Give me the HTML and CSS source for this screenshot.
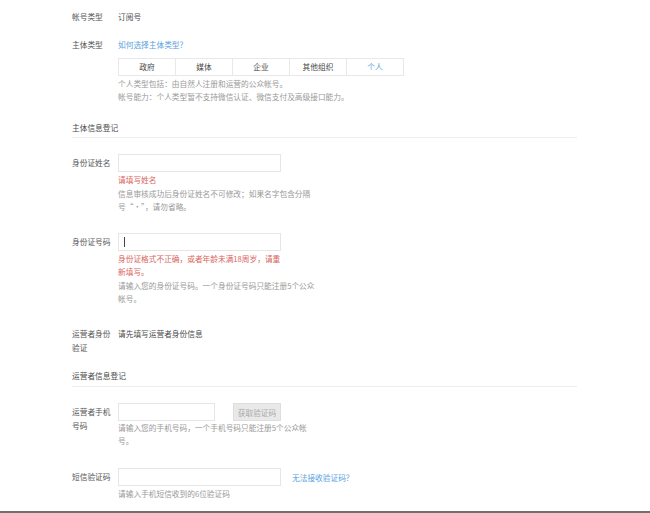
FILE: index.html
```html
<!DOCTYPE html>
<html lang="zh-CN">
<head>
    <meta charset="UTF-8">
    <meta name="viewport" content="width=device-width, initial-scale=1.0">
    <title>公众号注册 - 信息登记</title>
    <link rel="stylesheet" href="styles.css">
</head>
<body>

    <!-- Main form -->
    <div class="page">

        <div class="row">
            <div class="row-label">帐号类型</div>
            <div class="row-body">订阅号</div>
        </div>

        <div class="row row-type">
            <div class="row-label">主体类型</div>
            <div class="row-body">
                <a class="link" href="#">如何选择主体类型？</a>
                <ul class="types">
                    <li>政府</li>
                    <li>媒体</li>
                    <li>企业</li>
                    <li>其他组织</li>
                    <li class="active">个人</li>
                </ul>
                <p class="hint hint-wide">个人类型包括：由自然人注册和运营的公众帐号。<br>帐号能力：个人类型暂不支持微信认证、微信支付及高级接口能力。</p>
            </div>
        </div>

        <h3 class="section-title">主体信息登记</h3>

        <div class="row row-name">
            <label class="row-label field-label" for="idName">身份证姓名</label>
            <div class="row-body">
                <input class="input" type="text" id="idName">
                <p class="error">请填写姓名</p>
                <p class="hint">信息审核成功后身份证姓名不可修改；如果名字包含分隔号“·”，请勿省略。</p>
            </div>
        </div>

        <div class="row row-id">
            <label class="row-label field-label" for="idNumber">身份证号码</label>
            <div class="row-body">
                <div class="input-wrap">
                    <input class="input" type="text" id="idNumber">
                    <span class="caret"></span>
                </div>
                <p class="error">身份证格式不正确，或者年龄未满18周岁，请重新填写。</p>
                <p class="hint">请输入您的身份证号码。一个身份证号码只能注册5个公众帐号。</p>
            </div>
        </div>

        <div class="row row-verify">
            <div class="row-label">运营者身份验证</div>
            <div class="row-body verify-text">请先填写运营者身份信息</div>
        </div>

        <h3 class="section-title section-operator">运营者信息登记</h3>

        <div class="row row-phone">
            <label class="row-label field-label" for="phone">运营者手机号码</label>
            <div class="row-body">
                <div class="inline">
                    <input class="input input-short" type="text" id="phone">
                    <button class="btn-code" type="button" disabled>获取验证码</button>
                </div>
                <p class="hint hint-phone">请输入您的手机号码，一个手机号码只能注册5个公众帐号。</p>
            </div>
        </div>

        <div class="row row-sms">
            <label class="row-label field-label" for="smsCode">短信验证码</label>
            <div class="row-body">
                <div class="inline">
                    <input class="input" type="text" id="smsCode">
                    <a class="link link-sms" href="#">无法接收验证码？</a>
                </div>
                <p class="hint">请输入手机短信收到的6位验证码</p>
            </div>
        </div>

    </div>

    <div class="bottom-bar"></div>

</body>
</html>
```

FILE: styles.css
```css
* {
    margin: 0;
    padding: 0;
    box-sizing: border-box;
}
body {
    background: #fff;
    color: #4a4a4a;
    font-family: "Microsoft YaHei", "Noto Sans CJK SC", sans-serif;
    font-size: 7.7px;
    line-height: 13px;
}
.page {
    width: 505px;
    margin-left: 72px;
    padding-top: 10px;
}
.row {
    display: flex;
    margin-top: 14px;
}
.row:first-child {
    margin-top: 0;
}
.row-label {
    width: 46px;
    flex: none;
    padding-right: 4px;
    color: #555;
    line-height: 14px;
}
.field-label {
    padding-top: 2px;
}
.row-body {
    flex: 1;
}
.link {
    color: #5a9fe0;
    text-decoration: none;
}

/* subject type tabs */
.types {
    display: flex;
    list-style: none;
    width: 286px;
    height: 18px;
    margin-top: 7px;
    border: 1px solid #e8e8e8;
}
.types li {
    flex: 1;
    text-align: center;
    line-height: 16px;
    color: #4a4a4a;
    border-left: 1px solid #e8e8e8;
}
.types li:first-child {
    border-left: none;
}
.types li.active {
    color: #5a9fe0;
}

.hint {
    width: 197px;
    margin-top: 1px;
    color: #999;
}
.hint-wide {
    width: auto;
}
.hint-phone {
    width: 194px;
    margin-top: 0;
}
.error {
    width: 165px;
    margin-top: 1px;
    color: #d9645c;
}

/* section headers */
.section-title {
    margin-top: 18px;
    padding-bottom: 3px;
    border-bottom: 1px solid #ededed;
    font-size: 7.7px;
    font-weight: normal;
    color: #4a4a4a;
}
.section-operator {
    margin-top: 14px;
    padding-bottom: 4px;
}

/* inputs */
.input {
    display: block;
    width: 163px;
    height: 18px;
    border: 1px solid #e6e6e6;
    background: #fff;
    outline: none;
    font: inherit;
    padding: 0 6px;
}
.input-short {
    width: 97px;
}
.input-wrap {
    position: relative;
    width: 163px;
}
.caret {
    position: absolute;
    left: 6px;
    top: 4px;
    width: 1px;
    height: 10px;
    background: #444;
}
.inline {
    display: flex;
    align-items: center;
}
.btn-code {
    width: 48px;
    height: 18px;
    margin-left: 18px;
    border: 1px solid #dedede;
    background: #e9e9e9;
    color: #aaa;
    font: inherit;
}
.link-sms {
    margin-left: 11px;
}

.row-name { margin-top: 16px; }
.row-id { margin-top: 20px; }
.row-verify { margin-top: 22px; }
.verify-text { line-height: 14px; }
.row-phone { margin-top: 16px; }
.row-sms { margin-top: 21px; }

.bottom-bar {
    height: 3px;
    margin-top: 11px;
    background: #707070;
}
```
